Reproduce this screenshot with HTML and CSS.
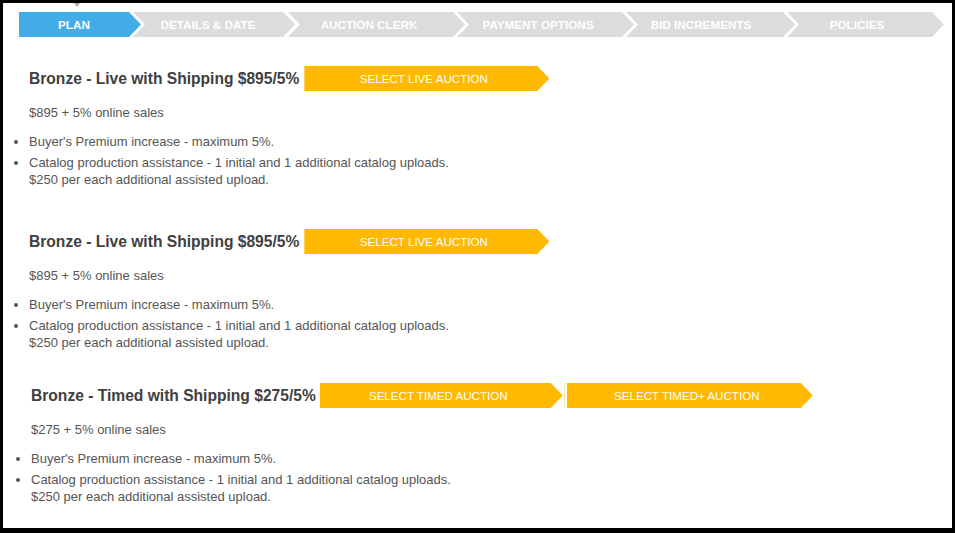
FILE: index.html
```html
<!DOCTYPE html>
<html lang="en">
<head>
    <meta charset="UTF-8">
    <meta name="viewport" content="width=device-width, initial-scale=1.0">
    <title>Choose a Plan</title>
    <link rel="stylesheet" href="styles.css">
</head>
<body>
    <div class="frame">
        <div class="wizard">
            <div class="step step-active step-plan">PLAN</div>
            <div class="step step-details">DETAILS &amp; DATE</div>
            <div class="step step-clerk">AUCTION CLERK</div>
            <div class="step step-payment">PAYMENT OPTIONS</div>
            <div class="step step-bid">BID INCREMENTS</div>
            <div class="step step-policies">POLICIES</div>
        </div>

        <div class="plan plan-first">
            <div class="plan-head">
                <h2 class="plan-title">Bronze - Live with Shipping $895/5%</h2>
                <a class="select-btn" href="#">SELECT LIVE AUCTION</a>
            </div>
            <p class="plan-price">$895 + 5% online sales</p>
            <ul class="plan-features">
                <li>Buyer's Premium increase - maximum 5%.</li>
                <li>Catalog production assistance - 1 initial and 1 additional catalog uploads.<br>$250 per each additional assisted upload.</li>
            </ul>
        </div>

        <div class="plan plan-second">
            <div class="plan-head">
                <h2 class="plan-title">Bronze - Live with Shipping $895/5%</h2>
                <a class="select-btn" href="#">SELECT LIVE AUCTION</a>
            </div>
            <p class="plan-price">$895 + 5% online sales</p>
            <ul class="plan-features">
                <li>Buyer's Premium increase - maximum 5%.</li>
                <li>Catalog production assistance - 1 initial and 1 additional catalog uploads.<br>$250 per each additional assisted upload.</li>
            </ul>
        </div>

        <div class="plan plan-timed">
            <div class="plan-head">
                <h2 class="plan-title">Bronze - Timed with Shipping $275/5%</h2>
                <a class="select-btn" href="#">SELECT TIMED AUCTION</a>
                <span class="btn-divider"></span>
                <a class="select-btn select-plus" href="#">SELECT TIMED+ AUCTION</a>
            </div>
            <p class="plan-price">$275 + 5% online sales</p>
            <ul class="plan-features">
                <li>Buyer's Premium increase - maximum 5%.</li>
                <li>Catalog production assistance - 1 initial and 1 additional catalog uploads.<br>$250 per each additional assisted upload.</li>
            </ul>
        </div>
    </div>
</body>
</html>
```

FILE: styles.css
```css
body {
    margin: 0;
    padding: 3px 3px 5px 3px;
    background: #000;
    font-family: "Liberation Sans", Arial, sans-serif;
}

.frame {
    height: 525px;
    background: #fff;
    padding: 9px 0 0 16px;
    box-sizing: border-box;
    overflow: hidden;
}

/* wizard steps */
.wizard {
    position: relative;
    display: flex;
    height: 25px;
}

.wizard::before {
    content: "";
    position: absolute;
    top: -9px;
    left: 55px;
    border-left: 3px solid transparent;
    border-right: 3px solid transparent;
    border-top: 4px solid #a9a9a9;
}

.step {
    flex: none;
    display: flex;
    align-items: center;
    justify-content: center;
    padding-right: 15px;
    box-sizing: border-box;
    margin-left: -8px;
    background: #dcdcdc;
    color: #fff;
    font-size: 11.7px;
    font-weight: bold;
    clip-path: polygon(0 0, calc(100% - 12px) 0, 100% 50%, calc(100% - 12px) 100%, 0 100%, 12px 50%);
}

.step-active {
    background: #42ade7;
    margin-left: 0;
    clip-path: polygon(0 0, calc(100% - 12px) 0, 100% 50%, calc(100% - 12px) 100%, 0 100%);
}

.step-plan { width: 122px; padding-right: 12px; }
.step-details { width: 162px; padding-right: 12px; }
.step-clerk { width: 177px; margin-left: -7px; }
.step-payment { width: 177px; }
.step-bid { width: 169px; padding-right: 19px; }
.step-policies { width: 157px; padding-right: 17px; }

/* plans */
.plan {
    padding-left: 10px;
}

.plan-first { margin-top: 29px; }
.plan-second { margin-top: 41px; }
.plan-timed { margin-top: 32px; padding-left: 12px; }

.plan-head {
    display: flex;
    align-items: center;
    height: 25px;
}

.plan-title {
    margin: 0 5px 0 0;
    font-size: 15.6px;
    font-weight: bold;
    color: #404040;
}

.plan-timed .plan-title {
    margin-right: 4px;
}

.select-btn {
    flex: none;
    display: flex;
    align-items: center;
    justify-content: center;
    width: 245px;
    height: 25px;
    padding-right: 6px;
    box-sizing: border-box;
    background: #ffb900;
    color: #fff;
    font-size: 11.6px;
    text-decoration: none;
    clip-path: polygon(0 0, calc(100% - 12px) 0, 100% 50%, calc(100% - 12px) 100%, 0 100%);
}

.plan-timed .select-btn {
    width: 243px;
}

.btn-divider {
    flex: none;
    width: 1px;
    height: 25px;
    margin: 0 2px 0 1px;
    background: #ffe7a6;
}

.plan-timed .select-plus {
    width: 246px;
}

.plan-price {
    margin: 14px 0 0;
    font-size: 13px;
    line-height: 16.5px;
    color: #555;
}

.plan-features {
    margin: 12px 0 0;
    padding: 0;
    font-size: 13px;
    line-height: 16.5px;
    color: #555;
}

.plan-features li + li {
    margin-top: 5px;
}
```
